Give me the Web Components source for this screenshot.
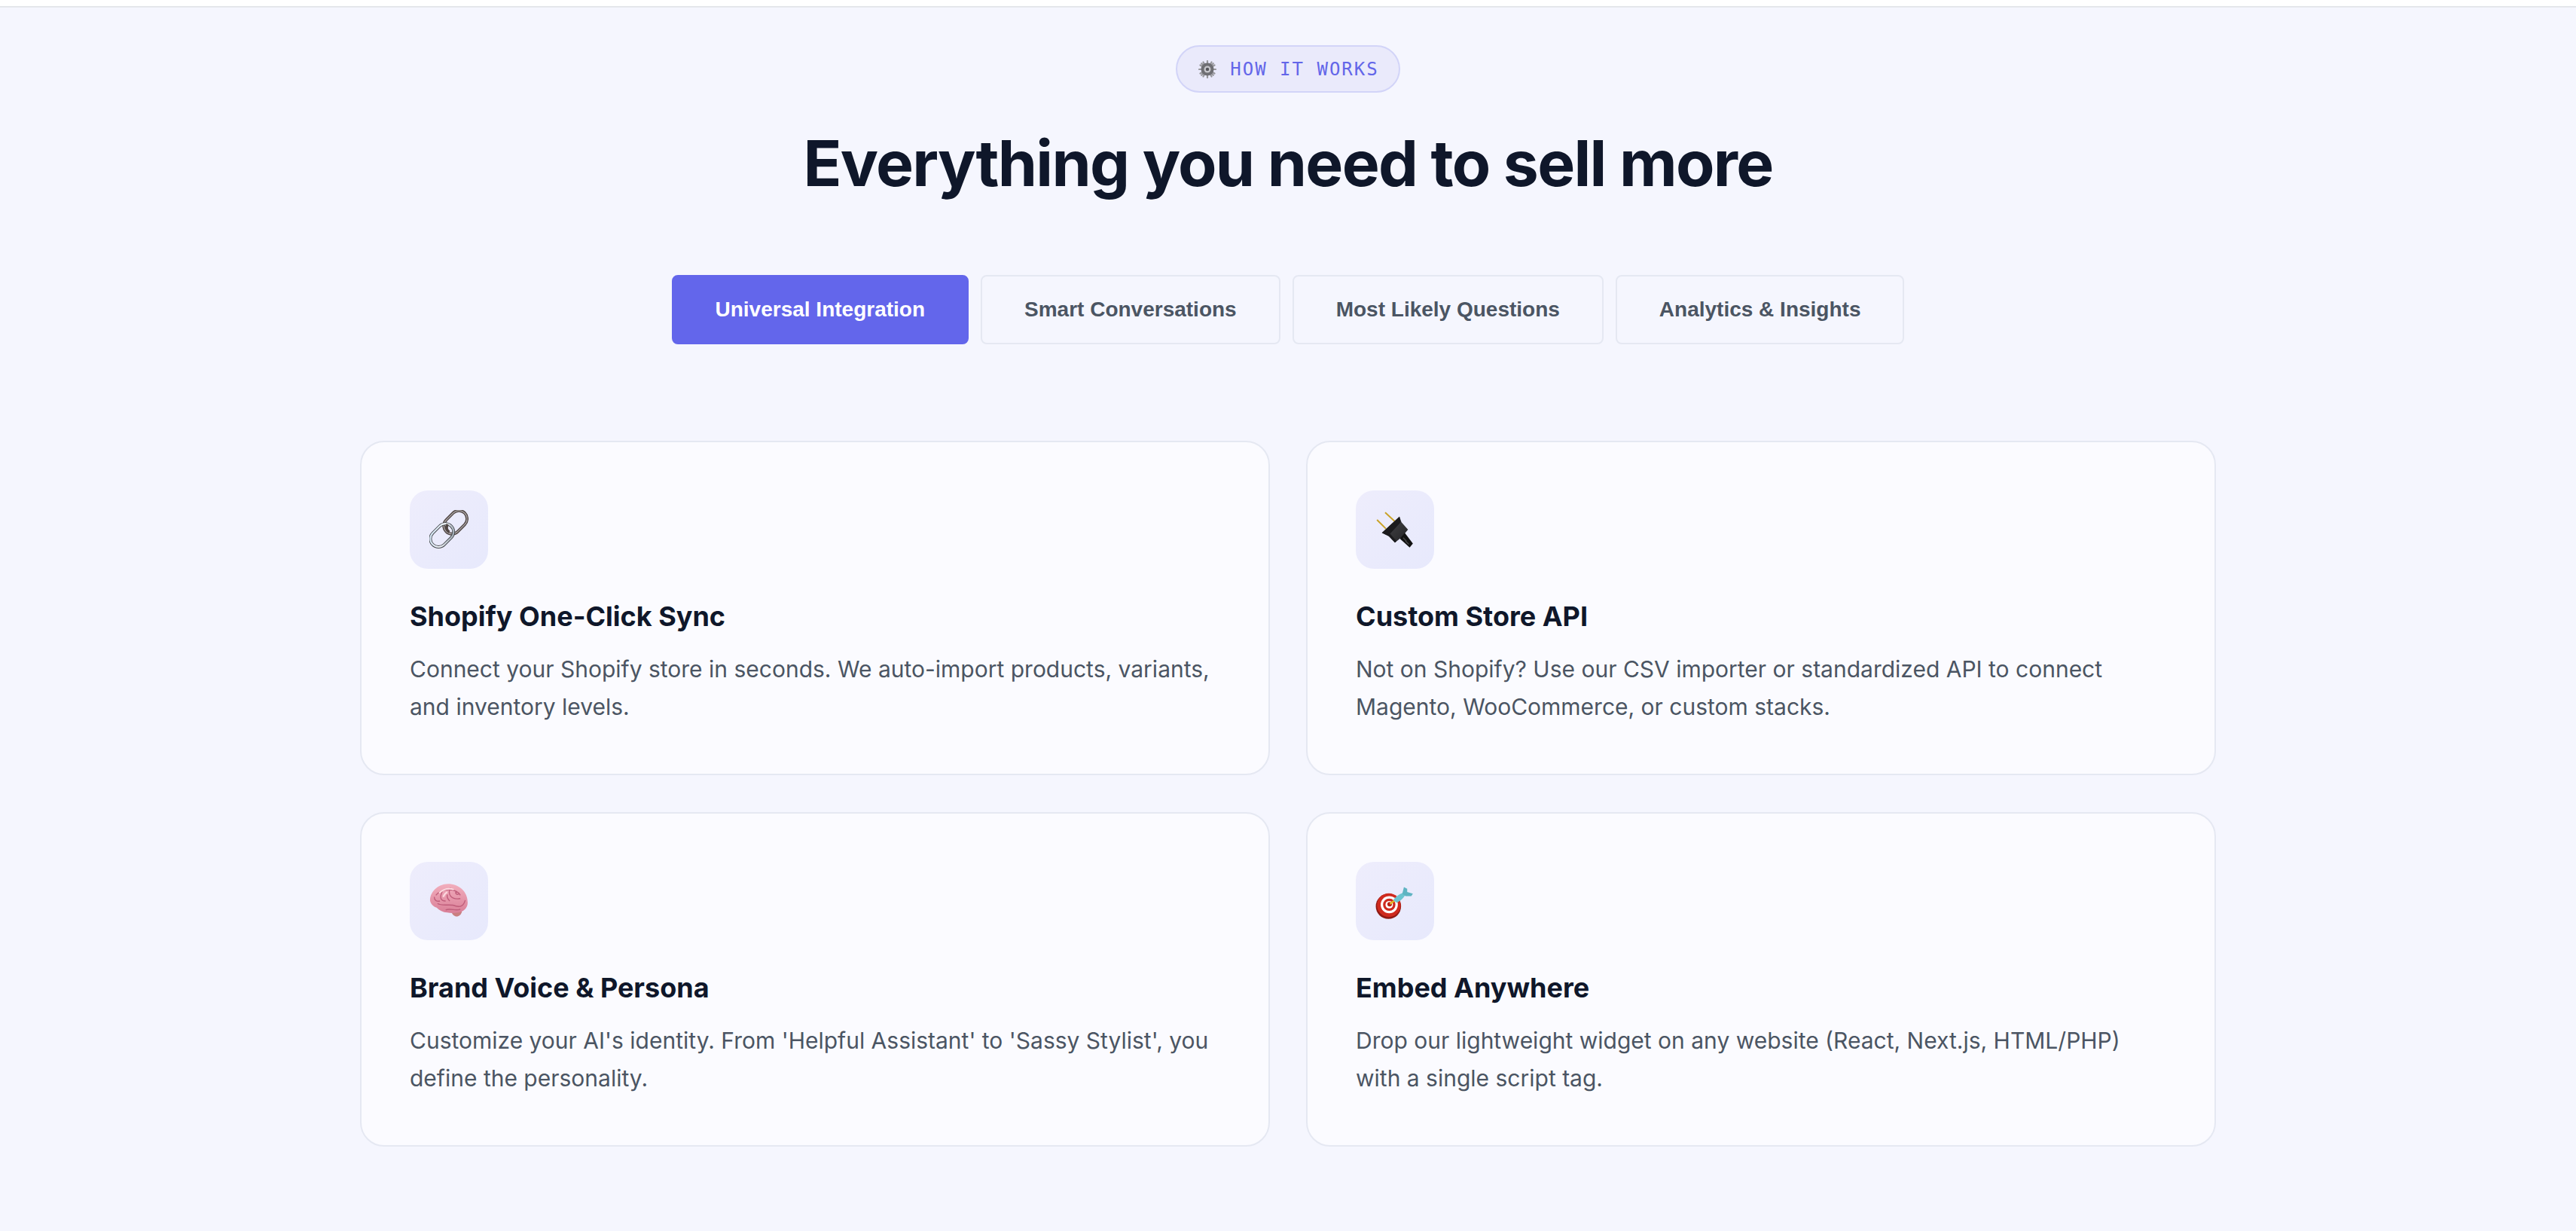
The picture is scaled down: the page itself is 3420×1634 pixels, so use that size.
<!DOCTYPE html>
<html>
    <head>
        <meta charset="utf-8" />
        <title>How it works</title>
        <style>
            html,
            body {
                margin: 0;
                background: #ffffff;
            }
        </style>
    </head>
    <body>
        <how-section>
            <section-badge slot="badge" label="HOW IT WORKS"></section-badge>
            <span slot="heading">Everything you need to sell more</span>
            <tab-button slot="tabs" active>Universal Integration</tab-button>
            <tab-button slot="tabs">Smart Conversations</tab-button>
            <tab-button slot="tabs">Most Likely Questions</tab-button>
            <tab-button slot="tabs">Analytics &amp; Insights</tab-button>
            <feature-card icon="link" heading="Shopify One-Click Sync">Connect your Shopify store in seconds. We auto-import products, variants, and inventory levels.</feature-card>
            <feature-card icon="plug" heading="Custom Store API">Not on Shopify? Use our CSV importer or standardized API to connect Magento, WooCommerce, or custom stacks.</feature-card>
            <feature-card icon="brain" heading="Brand Voice &amp; Persona">Customize your AI's identity. From 'Helpful Assistant' to 'Sassy Stylist', you define the personality.</feature-card>
            <feature-card icon="target" heading="Embed Anywhere">Drop our lightweight widget on any website (React, Next.js, HTML/PHP) with a single script tag.</feature-card>
        </how-section>

        <template id="how-section">
            <style>
                :host {
                    display: block;
                    margin-top: 8px;
                    min-height: 1626px;
                    box-sizing: border-box;
                    border-top: 2px solid #e5e7eb;
                    padding-top: 50px;
                    background: #f5f6fe;
                    font-family: Inter, 'Liberation Sans', sans-serif;
                }

                .head {
                    display: flex;
                    flex-direction: column;
                    align-items: center;
                }

                h2 {
                    margin: 42px 0 0;
                    font-size: 84px;
                    line-height: 104px;
                    font-weight: 700;
                    letter-spacing: -1.68px;
                    color: #0f172a;
                }

                .tabs {
                    display: flex;
                    justify-content: center;
                    gap: 16px;
                    margin-top: 96px;
                }

                .grid {
                    display: grid;
                    grid-template-columns: 1208px 1208px;
                    gap: 49px 48px;
                    justify-content: center;
                    margin-top: 128px;
                }
            </style>
            <div class="head">
                <slot name="badge"></slot>
                <h2><slot name="heading"></slot></h2>
            </div>
            <div class="tabs"><slot name="tabs"></slot></div>
            <div class="grid"><slot></slot></div>
        </template>

        <template id="section-badge">
            <style>
                :host {
                    display: inline-flex;
                    align-items: center;
                    gap: 18px;
                    height: 63px;
                    box-sizing: border-box;
                    padding: 0 26px 0 28px;
                    border: 2px solid #d2d4f8;
                    border-radius: 32px;
                    background: #eaeafb;
                    color: #6366e9;
                    font-family: 'DejaVu Sans Mono', 'Liberation Mono', monospace;
                    font-size: 24px;
                    letter-spacing: 2px;
                }
            </style>
            <emoji-icon name="gear" size="24"></emoji-icon>
            <span class="label"></span>
        </template>

        <template id="tab-button">
            <style>
                :host {
                    display: flex;
                    align-items: center;
                    height: 92px;
                    box-sizing: border-box;
                    padding: 0 56px;
                    border: 2px solid #e5e8f2;
                    border-radius: 8px;
                    color: #4b5563;
                    font-family: 'Liberation Sans', Arial, sans-serif;
                    font-size: 28px;
                    font-weight: 700;
                }

                :host([active]) {
                    background: #6366eb;
                    border-color: #6366eb;
                    color: #ffffff;
                }
            </style>
            <slot></slot>
        </template>

        <template id="feature-card">
            <style>
                :host {
                    display: block;
                    box-sizing: border-box;
                    height: 444px;
                    padding: 64px;
                    border: 2px solid #e5e8f2;
                    border-radius: 32px;
                    background: #fbfbff;
                }

                .icon {
                    display: flex;
                    align-items: center;
                    justify-content: center;
                    width: 104px;
                    height: 104px;
                    border-radius: 24px;
                    background: linear-gradient(135deg, #eeedfc, #e7e9fc);
                }

                h3 {
                    margin: 40px 0 0;
                    font-size: 36px;
                    line-height: 46px;
                    font-weight: 700;
                    color: #0f172a;
                }

                p {
                    margin: 22px 0 0;
                    font-size: 30px;
                    line-height: 50px;
                    color: #4b5563;
                }
            </style>
            <div class="icon"><emoji-icon size="52"></emoji-icon></div>
            <h3></h3>
            <p><slot></slot></p>
        </template>

        <script>
            // 每个图标都是手绘的 svg,坐标系 48x48
            const ICONS = {
                link: `
                    <defs>
                        <linearGradient id="steel" x1="0" y1="0" x2="1" y2="1">
                            <stop offset="0" stop-color="#c8dded"/>
                            <stop offset=".5" stop-color="#f2f6fa"/>
                            <stop offset="1" stop-color="#8d9aa5"/>
                        </linearGradient>
                    </defs>
                    <g fill="none">
                        <g transform="rotate(-45 32 15)">
                            <rect x="16" y="5" width="32" height="20" rx="10" stroke="#4e4442" stroke-width="3.6"/>
                            <rect x="16" y="5" width="32" height="20" rx="10" stroke="#a8a3a3" stroke-width="1.2"/>
                        </g>
                        <g transform="rotate(-45 15.5 31)">
                            <rect x="-0.5" y="21" width="32" height="20" rx="10" stroke="#3f4246" stroke-width="3.6"/>
                            <rect x="-0.5" y="21" width="32" height="20" rx="10" stroke="url(#steel)" stroke-width="2"/>
                        </g>
                        <path d="M22.5 17.5 C20 21 21 25 24.5 27" stroke="#4e4442" stroke-width="3.4"/>
                    </g>`,
                plug: `
                    <defs>
                        <linearGradient id="plugbody" x1="0" y1="0" x2="1" y2="1">
                            <stop offset="0" stop-color="#4a4a4d"/>
                            <stop offset="1" stop-color="#232325"/>
                        </linearGradient>
                    </defs>
                    <path d="M12 3 L24 14" stroke="#c9a227" stroke-width="1.8"/>
                    <path d="M2 12 L13 23" stroke="#c9a227" stroke-width="1.8"/>
                    <path d="M8 28 L29.5 8 L32 15 L40 24 L32 33.5 L24 40 L16.5 32 Z" fill="url(#plugbody)"/>
                    <path d="M8 28 L16.5 32 L24 40 L26 38 L18 29 L31 15 L29.5 8 Z" fill="#1b1b1d"/>
                    <path d="M30 35 L36 28 L46 41 L42 46 Z" fill="#121212"/>
                    <path d="M34 34 L38 38 M37 38 L41 42" stroke="#4a4a4a" stroke-width="1.2"/>`,
                brain: `
                    <defs>
                        <linearGradient id="brainfill" x1="0" y1="0" x2="0" y2="1">
                            <stop offset="0" stop-color="#f2aebd"/>
                            <stop offset="1" stop-color="#d97f97"/>
                        </linearGradient>
                    </defs>
                    <path d="M27 37 C30 35 37 35 40 37 C38 45 29 45 27 37 Z" fill="#c97f80"/>
                    <path d="M1 24 C0 14 10 3 23 3 C36 3 47 12 47 26 C47 33 41 37 36 38 C31 39 26 39 22 38 C17 38 12 35 9 32 C5 31 2 28 1 24 Z" fill="url(#brainfill)"/>
                    <path d="M8 17 C14 9 32 7 38 17 M16 12 C12 20 14 24 20 24 M26 8 C22 15 26 23 38 21 M33 12 C31 15 34 17 37 15 M10 27 C16 31 26 27 32 30 C38 32 42 30 44 23 M20 35 C26 32 32 37 38 34 M6 19 C6 23 9 25 13 24 M22 16 C21 20 23 22 25 24" fill="none" stroke="#bf5d7a" stroke-width="1.3"/>
                    <path d="M12 14 C18 9 24 8 30 10 M17 19 C18 16 20 14 22 13" fill="none" stroke="#fbd9df" stroke-width="1.8"/>`,
                target: `
                    <circle cx="16" cy="30.5" r="15.5" fill="#8f1a14"/>
                    <circle cx="16.5" cy="29" r="14.5" fill="#cf2a1e"/>
                    <circle cx="17" cy="28.5" r="10.5" fill="#ffffff"/>
                    <circle cx="17" cy="28.5" r="7.6" fill="#cf2a1e"/>
                    <circle cx="17" cy="28.5" r="4.6" fill="#ffffff"/>
                    <circle cx="17.5" cy="28" r="2.8" fill="#b81f14"/>
                    <path d="M18 27.5 L24 23" stroke="#e5c020" stroke-width="2.2"/>
                    <path d="M22 23 C25 18 32 14 37 13 C38 17 32 24 26 26 Z" fill="#6cc4cf"/>
                    <path d="M33 15 L35 7 L39 9 L39 13 L46 15 L44 18 L37 18 Z" fill="#5fb4c2"/>`,
                gear: `
                    <g stroke="#98989c" stroke-width="4.4" stroke-linecap="round">
                        <path d="M24 2V46M2 24H46M8.5 8.5L39.5 39.5M39.5 8.5L8.5 39.5M13 5L35 43M35 5L13 43M5 13L43 35M43 13L5 35"/>
                    </g>
                    <circle cx="24" cy="24" r="17" fill="#6f6f73"/>
                    <circle cx="24" cy="24" r="9" fill="#c6c6ca"/>
                    <circle cx="24" cy="24" r="4.5" fill="#55555a"/>`
            }

            // 把模板克隆进 shadow root
            function mount(el, id) {
                el.attachShadow({ mode: 'open' }).appendChild(
                    document.querySelector(id).content.cloneNode(true)
                )
            }

            customElements.define(
                'emoji-icon',
                class extends HTMLElement {
                    static get observedAttributes() {
                        return ['name']
                    }

                    constructor() {
                        super()
                        this.attachShadow({ mode: 'open' })
                    }

                    connectedCallback() {
                        this.render()
                    }

                    attributeChangedCallback() {
                        this.render()
                    }

                    render() {
                        const size = this.getAttribute('size') || 48
                        const name = this.getAttribute('name')
                        this.shadowRoot.innerHTML = `<style>:host{display:block;width:${size}px;height:${size}px}svg{display:block}</style>
                            <svg width="${size}" height="${size}" viewBox="0 0 48 48">${ICONS[name] || ''}</svg>`
                    }
                }
            )

            customElements.define(
                'how-section',
                class extends HTMLElement {
                    constructor() {
                        super()
                        mount(this, '#how-section')
                    }
                }
            )

            customElements.define(
                'section-badge',
                class extends HTMLElement {
                    constructor() {
                        super()
                        mount(this, '#section-badge')
                    }

                    connectedCallback() {
                        this.shadowRoot.querySelector('.label').textContent =
                            this.getAttribute('label')
                    }
                }
            )

            customElements.define(
                'tab-button',
                class extends HTMLElement {
                    constructor() {
                        super()
                        mount(this, '#tab-button')
                    }
                }
            )

            customElements.define(
                'feature-card',
                class extends HTMLElement {
                    constructor() {
                        super()
                        mount(this, '#feature-card')
                    }

                    connectedCallback() {
                        this.shadowRoot.querySelector('h3').textContent =
                            this.getAttribute('heading')
                        this.shadowRoot
                            .querySelector('emoji-icon')
                            .setAttribute('name', this.getAttribute('icon'))
                    }
                }
            )
        </script>
    </body>
</html>
